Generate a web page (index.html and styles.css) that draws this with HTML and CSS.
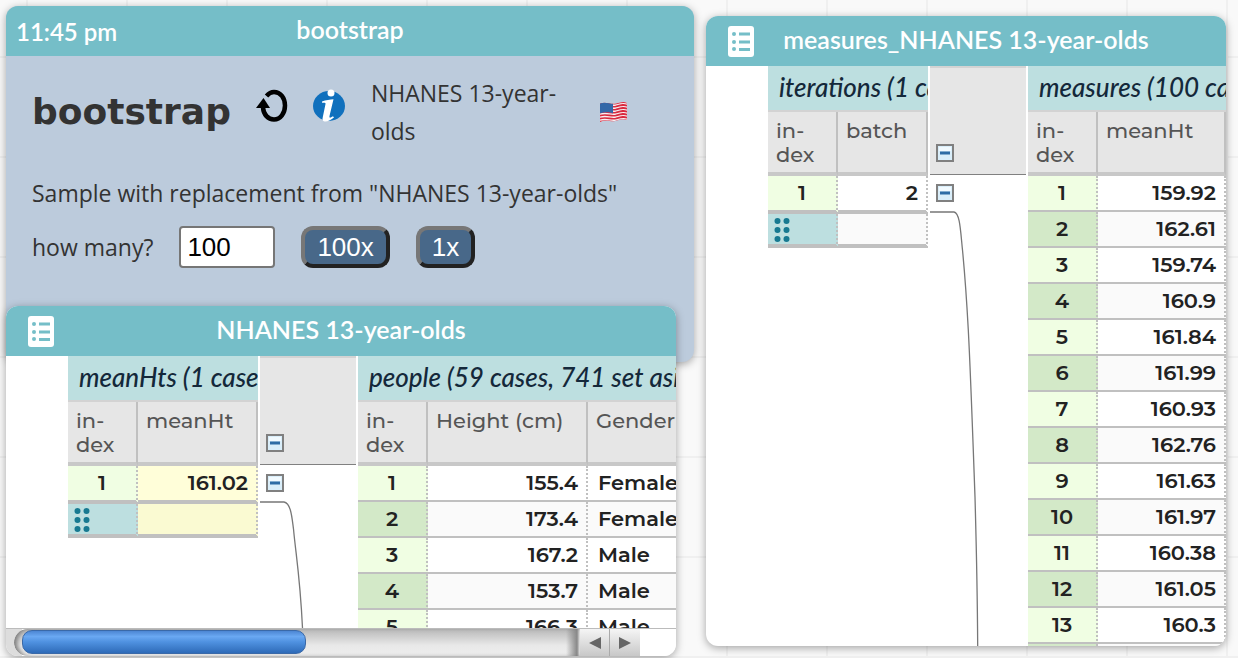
FILE: index.html
```html
<!DOCTYPE html>
<html lang="en">
<head>
<meta charset="utf-8">
<meta name="viewport" content="width=device-width, initial-scale=1">
<title>bootstrap</title>
<link rel="stylesheet" href="styles.css">
</head>
<body>
<svg class="defs" aria-hidden="true">
  <symbol id="list" viewBox="0 0 26 31">
    <rect width="26" height="31" rx="3" fill="#fff"/>
    <g fill="#75bec8"><circle cx="6" cy="8" r="2"/><circle cx="6" cy="16" r="2"/><circle cx="6" cy="23" r="2"/>
    <path d="M11 6.500h11v3H11zM11 14.500h11v3H11zM11 22h11v3H11z"/></g>
  </symbol>
  <symbol id="minus" viewBox="0 0 18 18">
    <rect x="1" y="1" width="16" height="16" fill="#d9eefa" stroke="#808080" stroke-width="2"/>
    <rect x="3" y="3" width="12" height="4" fill="#f1faff"/>
    <path d="M4 9h10" stroke="#2d6ca5" stroke-width="3"/>
  </symbol>
  <symbol id="drag" viewBox="0 0 16 25">
    <g fill="#177991"><circle cx="3.500" cy="4" r="3"/><circle cx="12.500" cy="4" r="3"/><circle cx="3.500" cy="13" r="3"/><circle cx="12.500" cy="13" r="3"/><circle cx="3.500" cy="22" r="3"/><circle cx="12.500" cy="22" r="3"/></g>
  </symbol>
</svg>
<main class="desktop">
  <div class="stack">
    <section class="window plugin">
      <header class="titlebar"><span class="clock">11:45 pm</span><h2>bootstrap</h2></header>
      <div class="plugin-body">
        <div class="intro">
          <h1>bootstrap</h1>
          <button class="icon-button" type="button" aria-label="Restart">
            <svg width="32" height="34" viewBox="0 0 32 34"><path d="M10.500 7C13 4 15 3 18 3c6.500 0 11 6 11 13.500S24.500 30.500 18 30.500c-6 0-10.500-5-11-12" fill="none" stroke="#000" stroke-width="4.500"/><path d="M0 19L7.500 9L14 19z"/></svg>
          </button>
          <button class="icon-button" type="button" aria-label="Information">
            <svg width="32" height="34" viewBox="0 0 32 34"><ellipse cx="16" cy="17" rx="16" ry="15" fill="#1070bd"/><circle cx="18" cy="4" r="3.500" fill="#fff"/><path d="M9 12.500c4-1.500 8-2 11.500-2.300L16.500 27c-.4 2 .5 2.300 3.500.3l1 1.200C17 31.500 14 33 11.500 32.500c-2-.4-2.300-2-1.700-4.500L12.500 15c.2-1-.2-1.500-3.500-1.200z" fill="#fff"/></svg>
          </button>
          <p class="dataset">NHANES 13-year-olds</p>
          <svg class="flag" width="29" height="22" viewBox="0 0 29 22" role="img" aria-label="United States flag">
            <clipPath id="f"><path d="M1 2.500C7 0 12 4 17 2.500S25 0 28 2V19c-5-2-8 0-12 1S6 18 1 21z"/></clipPath>
            <g clip-path="url(#f)"><path fill="#f8eef0" d="M0 0h29v22H0z"/>
            <g fill="none" stroke="#d92b40" stroke-width="1.600"><path d="M0 3C7 0 12 4 17 2.500S25 0 29 2M0 6C7 3 12 7 17 5.500S25 3 29 5M0 9c7-3 12 1 17-.5S25 6 29 8M0 12c7-3 12 1 17-.5S25 9 29 11M0 15c7-3 12 1 17-.5S25 12 29 14M0 18c7-3 12 1 17-.5S25 15 29 17M0 21c7-3 12 1 17-.5S25 18 29 20"/></g>
            <path fill="#3468a8" d="M0 0h14v12.500c-5-2-9-1-14 0z"/></g>
          </svg>
        </div>
        <p class="explain">Sample with replacement from "NHANES 13-year-olds"</p>
        <form class="controls">
          <label for="count">how many?</label>
          <input id="count" type="text" value="100">
          <button class="run" type="button">100x</button>
          <button class="run" type="button">1x</button>
        </form>
      </div>
    </section>

    <section class="window people">
      <header class="titlebar"><svg class="list" width="26" height="31"><use href="#list"/></svg><h2>NHANES 13-year-olds</h2></header>
      <div class="case-table">
        <div class="level parent">
          <h3>meanHts (1 cases)</h3>
          <table>
            <thead><tr><th class="idx">in-<br>dex</th><th>meanHt</th></tr></thead>
            <tbody><tr class="last"><td>1</td><td class="formula">161.02</td></tr>
            <tr class="entry"><td><svg width="16" height="25"><use href="#drag"/></svg></td><td class="formula"></td></tr></tbody>
          </table>
        </div>
        <div class="gutter">
          <div class="gutter-head"><button class="toggle" type="button" aria-label="Collapse all"><svg width="18" height="18"><use href="#minus"/></svg></button></div>
          <div class="gutter-row"><button class="toggle" type="button" aria-label="Collapse group 1"><svg width="18" height="18"><use href="#minus"/></svg></button></div>
          <svg class="relation" aria-hidden="true"><path d="M0 1H24C31 2 32 17 33.500 28C36 55 40 75 42.500 127"/></svg>
        </div>
        <div class="level child">
          <h3>people (59 cases, 741 set aside)</h3>
          <table>
            <thead><tr><th class="idx">in-<br>dex</th><th class="height">Height (cm)</th><th class="gender">Gender</th></tr></thead>
            <tbody>
              <tr><td>1</td><td>155.4</td><td class="text">Female</td></tr>
              <tr><td>2</td><td>173.4</td><td class="text">Female</td></tr>
              <tr><td>3</td><td>167.2</td><td class="text">Male</td></tr>
              <tr><td>4</td><td>153.7</td><td class="text">Male</td></tr>
              <tr><td>5</td><td>166.3</td><td class="text">Male</td></tr>
            </tbody>
          </table>
        </div>
      </div>
      <div class="scrollbar">
        <div class="track"><div class="thumb"></div></div>
        <button type="button" aria-label="Scroll left"><svg width="12" height="12" viewBox="0 0 12 12"><path d="M12 0v12L0 6z"/></svg></button>
        <button type="button" aria-label="Scroll right"><svg width="12" height="12" viewBox="0 0 12 12"><path d="M0 0v12l12-6z"/></svg></button>
      </div>
    </section>
  </div>

  <section class="window measures">
    <header class="titlebar"><svg class="list" width="26" height="31"><use href="#list"/></svg><h2>measures_NHANES 13-year-olds</h2></header>
    <div class="case-table">
      <div class="level parent">
        <h3>iterations (1 cases)</h3>
        <table>
          <thead><tr><th class="idx">in-<br>dex</th><th>batch</th></tr></thead>
          <tbody><tr class="last"><td>1</td><td>2</td></tr>
          <tr class="entry"><td><svg width="16" height="25"><use href="#drag"/></svg></td><td></td></tr></tbody>
        </table>
      </div>
      <div class="gutter">
        <div class="gutter-head"><button class="toggle" type="button" aria-label="Collapse all"><svg width="18" height="18"><use href="#minus"/></svg></button></div>
        <div class="gutter-row"><button class="toggle" type="button" aria-label="Collapse group 1"><svg width="18" height="18"><use href="#minus"/></svg></button></div>
        <svg class="relation" aria-hidden="true"><path d="M0 1H24C30 2 30.500 20 32.500 39C35 65 37 95 38.300 119C41 170 44 260 45 286C46.500 340 47.500 400 47.700 436"/></svg>
      </div>
      <div class="level child">
        <h3>measures (100 cases)</h3>
        <table>
          <thead><tr><th class="idx">in-<br>dex</th><th>meanHt</th></tr></thead>
          <tbody>
            <tr><td>1</td><td>159.92</td></tr>
            <tr><td>2</td><td>162.61</td></tr>
            <tr><td>3</td><td>159.74</td></tr>
            <tr><td>4</td><td>160.9</td></tr>
            <tr><td>5</td><td>161.84</td></tr>
            <tr><td>6</td><td>161.99</td></tr>
            <tr><td>7</td><td>160.93</td></tr>
            <tr><td>8</td><td>162.76</td></tr>
            <tr><td>9</td><td>161.63</td></tr>
            <tr><td>10</td><td>161.97</td></tr>
            <tr><td>11</td><td>160.38</td></tr>
            <tr><td>12</td><td>161.05</td></tr>
            <tr><td>13</td><td>160.3</td></tr>
            <tr><td></td><td></td></tr>
          </tbody>
        </table>
      </div>
    </div>
  </section>
</main>
</body>
</html>
```

FILE: styles.css
```css
* { box-sizing: border-box; }
body { margin: 0; font-family: Montserrat, Inter, sans-serif; color: #222; }
h1, h2, h3, p { margin: 0; }
button { padding: 0; font: inherit; }
.defs { position: absolute; width: 0; height: 0; }

.desktop {
  display: grid;
  grid-template-columns: 688fr 520fr;
  gap: 12px;
  height: 100vh;
  padding: 6px 12px 2px 6px;
  overflow: hidden;
  background-color: #f9f9f9;
  background-image: linear-gradient(#f0f0f0 2px, transparent 2px), linear-gradient(90deg, #f0f0f0 2px, transparent 2px);
  background-size: 100px 100px;
  background-position: 26px 56px;
}
.stack { position: relative; min-width: 0; }
.window {
  display: flex;
  flex-direction: column;
  min-width: 0;
  overflow: hidden;
  border-radius: 12px;
  background: #fff;
  box-shadow: 0 2px 8px rgba(0, 0, 0, .35);
}
.plugin { background: #bccbdc; }
.people { position: absolute; top: 300px; bottom: 0; left: 0; right: 18px; }
.measures { margin: 10px 0; }

.titlebar {
  display: grid;
  grid-template-columns: 1fr auto 1fr;
  align-items: center;
  flex: none;
  height: 50px;
  padding: 0 10px;
  background: #75bec8;
  color: #fff;
  font-family: "Museo Sans", Lato, sans-serif;
}
.titlebar h2 { grid-column: 2; padding-bottom: 4px; font-size: 25px; line-height: 44px; font-weight: 600; white-space: nowrap; }
.clock { font-size: 24px; font-weight: 600; }
.list { margin-left: 12px; }

.plugin-body {
  padding: 18px 26px 94px;
  color: #333;
  font-family: "Open Sans", sans-serif;
  font-size: 23px;
}
.intro { display: flex; align-items: center; height: 76px; }
h1 { font-family: Verdana, "DejaVu Sans", sans-serif; font-size: 36px; line-height: 44px; }
.icon-button { display: flex; align-self: flex-start; margin: 15px 0 0 25px; border: 0; background: none; }
.dataset { width: 200px; margin-left: 26px; line-height: 38px; }
.flag { margin-left: 28px; }
.explain { margin-top: 24px; line-height: 38px; }
.controls { display: flex; align-items: center; gap: 26px; margin-top: 14px; }
.controls input {
  width: 96px;
  height: 42px;
  padding: 2px 6px;
  border: 2px solid #767676;
  border-radius: 4px;
  background: #fff;
  color: #000;
  font: 26px "Liberation Sans", sans-serif;
}
.run {
  height: 42px;
  padding: 0 12px;
  border: 4px solid;
  border-color: #777 #222 #222 #777;
  border-radius: 12px;
  background: #486889;
  color: #fff;
  font: 26px/34px "Liberation Sans", sans-serif;
}

.case-table { display: flex; flex: 1; gap: 2px; min-height: 0; padding-left: 62px; overflow: hidden; }
.level { overflow: hidden; }
.people .parent { flex: 0 0 190px; }
.measures .parent { flex: 0 0 160px; }
.child { flex: 1; min-width: 0; }
h3 {
  height: 46px;
  padding-left: 11px;
  overflow: hidden;
  border-bottom: 2px solid #d3d3d3;
  background: #bddfe0;
  color: #14283a;
  font: italic 500 26px/42px "Museo Sans", Lato, sans-serif;
  white-space: nowrap;
}
table { width: 100%; table-layout: fixed; border-collapse: separate; border-spacing: 0; font-size: 21px; }
th {
  height: 64px;
  padding: 7px 8px 3px;
  border-right: 2px solid #c0c0c0;
  border-bottom: 4px solid #c8c8c8;
  background: #e6e6e6;
  color: #555;
  font-weight: 500;
  line-height: 24px;
  text-align: left;
  vertical-align: top;
  white-space: nowrap;
}
.idx { width: 70px; }
.height { width: 160px; }
.people .child table { width: 400px; }
td {
  height: 36px;
  padding: 0 8px;
  border-right: 2px dotted #c0c0c0;
  border-bottom: 2px solid #c0c0c0;
  font-weight: 600;
  line-height: 34px;
  text-align: right;
}
tbody tr:nth-child(even) td { background: #fafafa; }
tbody tr td:first-child { background: #f0fee3; text-align: center; }
tbody tr:nth-child(even) td:first-child { background: #d3e9c8; }
tbody .text { padding-left: 10px; text-align: left; }
.last td { height: 38px; border-bottom-width: 4px; }
.entry td { height: 34px; border-bottom-width: 4px; line-height: 0; }
tbody tr.entry:nth-child(even) td:first-child { padding: 0 6px; background: #bddfe0; text-align: left; }
tbody .last .formula { background: #fffed9; }
tbody tr.entry:nth-child(even) .formula { background: #fafad2; }

.gutter { display: flex; flex: 0 0 96px; flex-direction: column; }
.gutter-head {
  display: flex;
  align-items: flex-end;
  flex: none;
  height: 109px;
  padding: 0 6px 12px;
  border-top: 2px solid #d3d3d3;
  border-bottom: 1px solid #808080;
  background: #e6e6e6;
}
.gutter-row { display: flex; align-items: center; flex: none; height: 36px; padding: 0 6px; }
.toggle { display: block; width: 18px; height: 18px; border: 0; background: none; }
.toggle svg { display: block; }
.relation { flex: 1; width: 96px; min-height: 0; overflow: hidden; }
.relation path { fill: none; stroke: #777; stroke-width: 1.3; }

.scrollbar { display: flex; flex: none; height: 28px; padding-right: 36px; border-top: 1px solid #bbb; background: linear-gradient(90deg, #ddd 16px, #fff 16px); }
.track {
  flex: 1;
  margin-left: 8px;
  padding: 1px 2px 3px 8px;
  border-radius: 14px 0 0 14px;
  background: linear-gradient(90deg, transparent calc(100% - 14px), #888 calc(100% - 3px), #e8e8e8), linear-gradient(#b8b8b8, #e8e8e8 60%, #eee);
  box-shadow: inset 5px 0 5px -2px #777;
}
.thumb {
  width: 51%;
  height: 24px;
  border: 1px solid #3a69a8;
  border-radius: 10px;
  background: linear-gradient(#4c86d3, #6aa8f2 25%, #4f91e0 50%, #2e6bb8);
}
.scrollbar button {
  display: grid;
  place-items: center;
  width: 30px;
  border: 0;
  border-right: 1px solid #aaa;
  background: linear-gradient(#f5f5f5, #c8c8c8);
}
.scrollbar button:last-child { border-right: 0; }
.scrollbar button path { fill: #666; }
```
